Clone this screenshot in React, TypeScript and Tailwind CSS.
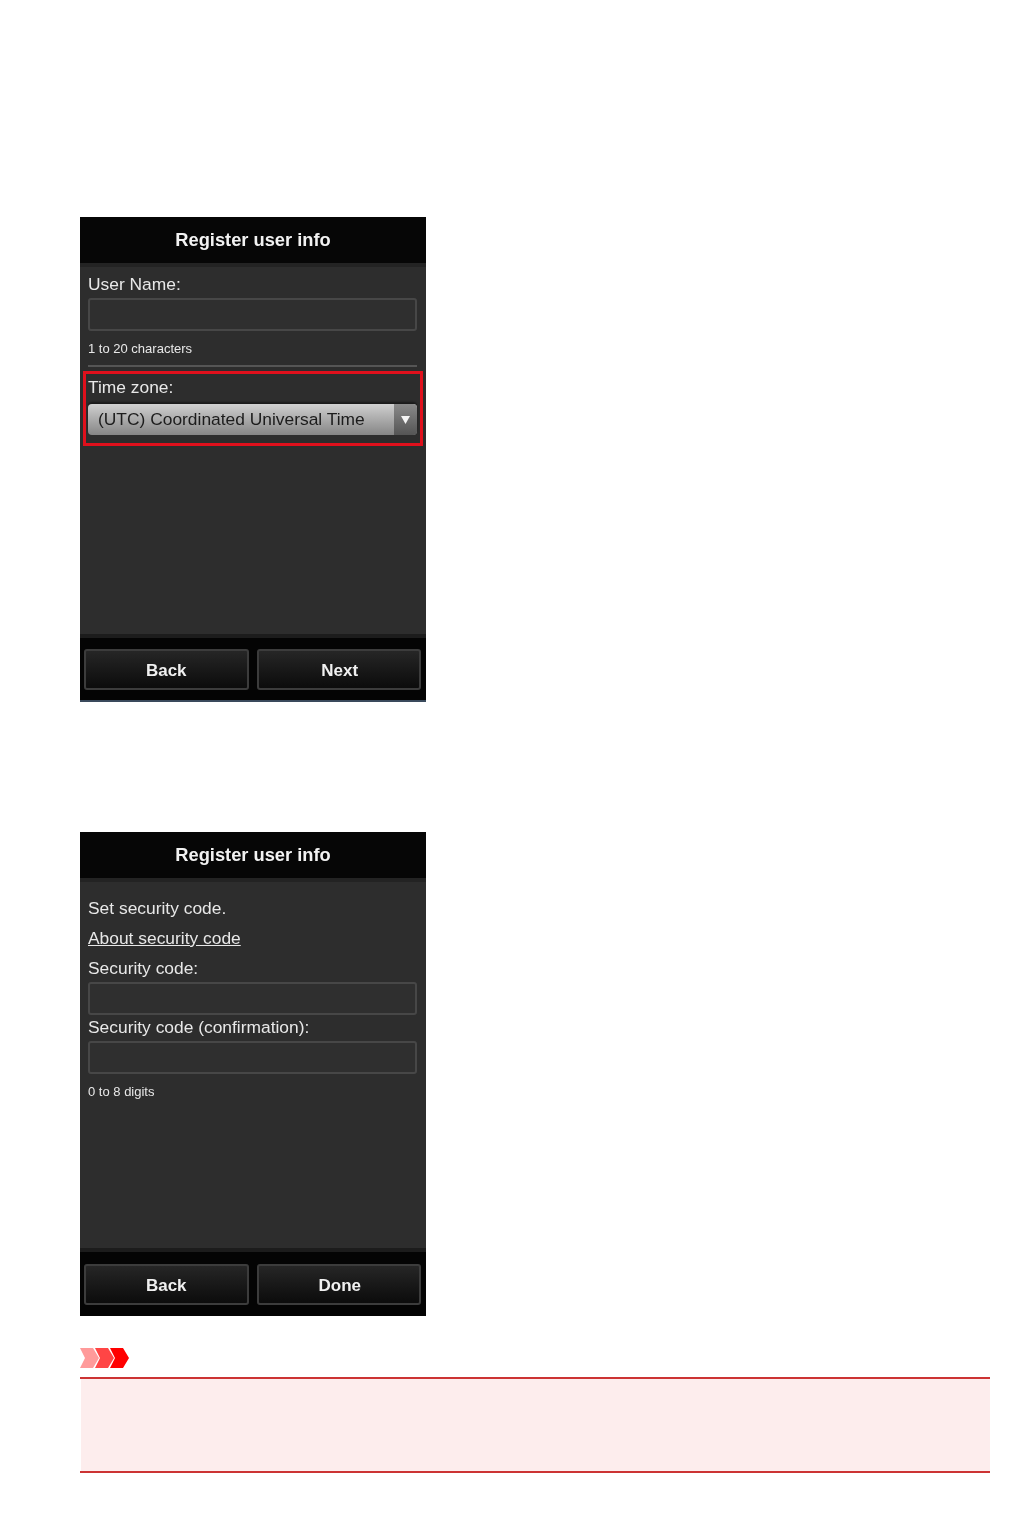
const font = { fontFamily: '"Liberation Sans", Arial, sans-serif' };

function TextField() {
  return <div className="h-[33px] rounded-[3px] border-2 border-[#474747] bg-[#2f2f2f]" />;
}

function Header() {
  return (
    <div className="h-[50px] shrink-0 border-b-4 border-[#232323] bg-[#060606] pt-[11px] text-center text-[18.3px] leading-[24px] font-bold text-[#f2f2f2]">
      Register user info
    </div>
  );
}

function Footer({ right, className }: { right: string; className: string }) {
  const btn =
    'flex h-[41px] flex-1 items-center justify-center rounded-[3px] border-2 border-[#3c3c3c] bg-gradient-to-b from-[#262626] to-[#0c0c0c] pt-[2px] text-[17px] font-bold text-[#f0f0f0]';
  return (
    <div className={`mt-auto flex h-[68px] shrink-0 gap-[8px] border-t-4 border-t-[#1c1c1c] bg-[#040404] pl-[4px] pr-[5px] ${className}`}>
      <div className={btn}>Back</div>
      <div className={btn}><span className="ml-[2px]">{right}</span></div>
    </div>
  );
}

function PhoneScreen({ className, children }: { className: string; children: React.ReactNode }) {
  return <div className={`flex w-[346px] flex-col bg-[#2d2d2d] blur-[0.5px] ${className}`}>{children}</div>;
}

function ImportantIcon() {
  return (
    <svg width="49" height="20" viewBox="0 0 49 20" className="block">
      <polygon points="0,0 13,0 19,10 13,20 0,20 5,10" fill="#ff9a9a" />
      <polygon points="15,0 28,0 34,10 28,20 15,20 20,10" fill="#ff4545" />
      <polygon points="30,0 43,0 49,10 43,20 30,20 35,10" fill="#ff0000" />
    </svg>
  );
}

export default function App() {
  return (
    <div className="h-[1514px] bg-white pt-[217px] pl-[80px] pr-[31px]" style={font}>
      {/* Step 1 */}
      <PhoneScreen className="h-[485px]">
        <Header />
        <div className="pl-2 pr-[9px] text-[#e8e8e8]">
          <div className="pt-[7px] text-[17.4px] leading-[20px]">User Name:</div>
          <div className="mt-[4px]"><TextField /></div>
          <div className="mt-[10px] text-[13px] leading-[16px]">1 to 20 characters</div>
          <div className="mt-[8px] h-[2px] bg-[#555555]" />
          <div className="ml-[-5px] mr-[-6px] mt-[4px] h-[75px] border-[3px] border-[#e0101c] pl-[2px] pr-[3px]">
            <div className="pt-[3px] text-[17.4px] leading-[20px]">Time zone:</div>
            <div className="mt-[7px] flex h-[31px] overflow-hidden rounded-[4px] bg-gradient-to-b from-[#d0d0d0] to-[#868686] text-[17.4px] leading-[31px] text-[#1c1c1c] shadow-[0_-2px_2px_#1a1a1a]">
              <div className="flex-1 truncate pl-[10px]">(UTC) Coordinated Universal Time</div>
              <div className="flex w-[23px] items-center justify-center bg-gradient-to-b from-[#8a8a8a] to-[#555555]">
                <svg width="9" height="8" viewBox="0 0 9 8"><polygon points="0,0 9,0 4.5,8" fill="#f4f4f4" /></svg>
              </div>
            </div>
          </div>
        </div>
        <Footer right="Next" className="border-b-2 border-b-[#3a4a5c] pt-[11px]" />
      </PhoneScreen>

      {/* Step 2 */}
      <PhoneScreen className="mt-[130px] h-[484px]">
        <Header />
        <div className="pl-2 pr-[9px] text-[#e8e8e8]">
          <div className="pt-[16px] text-[17.4px] leading-[20px]">Set security code.</div>
          <div className="mt-[10px] text-[17.4px] leading-[20px] underline">About security code</div>
          <div className="mt-[10px] text-[17.4px] leading-[20px]">Security code:</div>
          <div className="mt-[4px]"><TextField /></div>
          <div className="mt-[2px] text-[17.4px] leading-[20px]">Security code (confirmation):</div>
          <div className="mt-[4px]"><TextField /></div>
          <div className="mt-[10px] text-[13px] leading-[16px]">0 to 8 digits</div>
        </div>
        <Footer right="Done" className="pt-[12px]" />
      </PhoneScreen>

      {/* Important note */}
      <div className="mt-[32px]"><ImportantIcon /></div>
      <div className="mt-[9px] h-[96px] border-y-2 border-[#cc3333]">
        <div className="ml-px h-full bg-[#fdeded]" />
      </div>
    </div>
  );
}
